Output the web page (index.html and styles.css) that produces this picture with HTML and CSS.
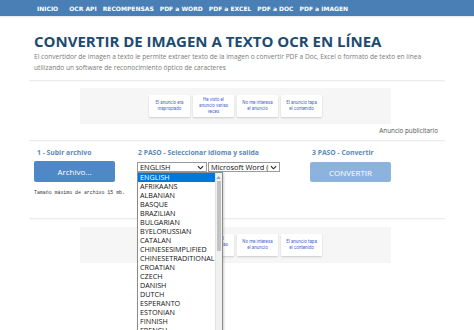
FILE: index.html
```html
<!DOCTYPE html>
<html lang="es">
<head>
    <meta charset="UTF-8">
    <meta name="viewport" content="width=device-width, initial-scale=1.0">
    <title>Convertir de imagen a texto OCR en línea</title>
    <link rel="stylesheet" href="styles.css">
</head>
<body>
    <!-- barra de navegación -->
    <nav class="topbar">
        <ul class="menu">
            <li class="menu-home">INICIO</li>
            <li>OCR API</li>
            <li>RECOMPENSAS</li>
            <li>PDF a WORD</li>
            <li>PDF a EXCEL</li>
            <li>PDF a DOC</li>
            <li>PDF a IMAGEN</li>
        </ul>
    </nav>

    <main class="page">
        <header class="intro">
            <h1>CONVERTIR DE IMAGEN A TEXTO OCR EN LÍNEA</h1>
            <p>El convertidor de imagen a texto le permite extraer texto de la imagen o convertir PDF a Doc, Excel o formato de texto en línea utilizando un software de reconocimiento óptico de caracteres</p>
        </header>

        <hr class="sep">

        <div class="ad-box">
            <div class="ad-btn">El anuncio era<br>inapropiado</div>
            <div class="ad-btn">He visto el<br>anuncio varias<br>veces</div>
            <div class="ad-btn">No me interesa<br>el anuncio</div>
            <div class="ad-btn">El anuncio tapa<br>el contenido</div>
        </div>
        <div class="ad-label">Anuncio publicitario</div>

        <hr class="sep sep-steps">

        <!-- pasos -->
        <section class="steps">
            <div class="step step-upload">
                <div class="step-title">1 - Subir archivo</div>
                <div class="btn btn-file">Archivo...</div>
                <div class="file-note">Tamaño máximo de archivo 15 mb.</div>
            </div>
            <div class="step step-options">
                <div class="step-title">2 PASO - Seleccionar idioma y salida</div>
                <div class="selects">
                    <div class="fake-select select-lang">
                        <span>ENGLISH</span>
                        <svg class="caret" viewBox="0 0 8 5" width="7" height="5"><path d="M1 1 L4 4 L7 1" fill="none" stroke="#222" stroke-width="1.3"/></svg>
                    </div>
                    <div class="fake-select select-out">
                        <span>Microsoft Word (docx)</span>
                        <svg class="caret" viewBox="0 0 8 5" width="7" height="5"><path d="M1 1 L4 4 L7 1" fill="none" stroke="#222" stroke-width="1.3"/></svg>
                    </div>

                    <!-- lista abierta del idioma -->
                    <div class="dropdown">
                        <ul class="options">
                            <li class="selected">ENGLISH</li>
                            <li>AFRIKAANS</li>
                            <li>ALBANIAN</li>
                            <li>BASQUE</li>
                            <li>BRAZILIAN</li>
                            <li>BULGARIAN</li>
                            <li>BYELORUSSIAN</li>
                            <li>CATALAN</li>
                            <li>CHINESESIMPLIFIED</li>
                            <li>CHINESETRADITIONAL</li>
                            <li>CROATIAN</li>
                            <li>CZECH</li>
                            <li>DANISH</li>
                            <li>DUTCH</li>
                            <li>ESPERANTO</li>
                            <li>ESTONIAN</li>
                            <li>FINNISH</li>
                            <li>FRENCH</li>
                        </ul>
                        <div class="scrollbar">
                            <div class="scroll-arrow">
                                <svg viewBox="0 0 6 4" width="5" height="3"><path d="M0 4 L3 0 L6 4 Z" fill="#a0a0a0"/></svg>
                            </div>
                            <div class="scroll-thumb"></div>
                        </div>
                    </div>
                </div>
            </div>
            <div class="step step-convert">
                <div class="step-title">3 PASO - Convertir</div>
                <div class="btn btn-convert">CONVERTIR</div>
            </div>
        </section>

        <hr class="sep sep-bottom">

        <div class="ad-box">
            <div class="ad-btn">El anuncio era<br>inapropiado</div>
            <div class="ad-btn">He visto el<br>anuncio varias<br>veces</div>
            <div class="ad-btn">No me interesa<br>el anuncio</div>
            <div class="ad-btn">El anuncio tapa<br>el contenido</div>
        </div>
    </main>
</body>
</html>
```

FILE: styles.css
```css
html,
body {
    margin: 0;
    height: 330px;
    overflow: hidden;
    background: #fff;
    font-family: "Open Sans", "Noto Sans", sans-serif;
}

/* barra superior */
.topbar {
    height: 16px;
    background-color: #4a7fb6;
    box-shadow: 0 1px 1px rgba(0, 0, 0, .08);
}
.menu {
    list-style: none;
    margin: 0;
    padding: 0 0 0 37px;
    display: flex;
    gap: 6px;
    height: 16px;
    align-items: center;
}
.menu li {
    color: #fff;
    font-family: "DejaVu Sans", sans-serif;
    font-weight: bold;
    font-size: 6px;
    white-space: nowrap;
}
.menu .menu-home {
    margin-right: 5px;
}

.page {
    width: 416px;
    margin: 0 auto;
}

.intro {
    padding-left: 5px;
}
.intro h1 {
    margin: 15px 0 0;
    font-size: 15px;
    line-height: 20px;
    font-weight: 700;
    color: #1d4b70;
    white-space: nowrap;
}
.intro p {
    margin: 0;
    padding-right: 20px;
    font-size: 6.6px;
    line-height: 11px;
    color: #7a7a7a;
}

.sep {
    margin: 7px 0 0;
    border: 0;
    height: 1px;
    background: #ececec;
    box-shadow: 0 1px 1px rgba(0, 0, 0, .03);
}
.sep-steps {
    margin-top: 4px;
}
.sep-bottom {
    margin-top: 22px;
}

/* anuncios */
.ad-box {
    margin: 7px 0 0 51px;
    width: 311px;
    height: 36px;
    background: #f6f6f6;
    display: flex;
    justify-content: center;
    align-items: center;
    gap: 3px;
}
.sep-bottom + .ad-box {
    margin-top: 8px;
}
.ad-btn {
    width: 41px;
    height: 22px;
    background: #fff;
    box-shadow: 0 1px 2px rgba(0, 0, 0, .18);
    border-radius: 1px;
    display: flex;
    align-items: center;
    justify-content: center;
    text-align: center;
    font-family: Roboto, sans-serif;
    font-size: 4.5px;
    line-height: 6px;
    color: #4a68cf;
}
.ad-label {
    margin-top: 2px;
    padding-right: 7px;
    text-align: right;
    font-size: 6.3px;
    line-height: 10px;
    color: #555;
}

/* pasos */
.steps {
    margin-top: 7px;
    display: grid;
    grid-template-columns: 108px 173px 81px;
}
.step-title {
    font-size: 6.8px;
    line-height: 9px;
    font-weight: 700;
    color: #5a88be;
    white-space: nowrap;
}
.step-upload {
    padding-left: 5px;
}
.step-upload .step-title {
    padding-left: 3px;
}
.step-options .step-title {
    padding-left: 1px;
}
.step-convert .step-title {
    padding-left: 2px;
}

.btn {
    width: 81px;
    height: 21px;
    margin-top: 4px;
    border-radius: 2px;
    color: #fff;
    font-size: 8px;
    display: flex;
    align-items: center;
    justify-content: center;
}
.btn-file {
    background: #4f88c7;
}
.btn-convert {
    background: #8cb3dd;
    height: 20px;
    margin-top: 5px;
}
.file-note {
    margin-top: 8px;
    font-family: "Liberation Mono", monospace;
    font-size: 4.9px;
    line-height: 6px;
    color: #333;
    white-space: nowrap;
}

.selects {
    position: relative;
    margin-top: 5px;
    display: flex;
    gap: 1px;
}
.fake-select {
    box-sizing: border-box;
    height: 10px;
    border: 1px solid #9a9a9a;
    background: #fff;
    display: flex;
    align-items: center;
    padding: 0 2px;
    font-size: 7.4px;
    color: #111;
    overflow: hidden;
    white-space: nowrap;
}
.fake-select span {
    flex: 1;
    overflow: hidden;
}
.select-lang {
    width: 70px;
}
.select-out {
    width: 72px;
}
.caret {
    flex: none;
    margin-left: 1px;
}

/* lista desplegada */
.dropdown {
    position: absolute;
    top: 10px;
    left: 0;
    width: 86px;
    height: 162px;
    box-sizing: border-box;
    border: 1px solid #8c8c8c;
    background: #fff;
    display: flex;
    box-shadow: 1px 1px 2px rgba(0, 0, 0, .2);
}
.options {
    list-style: none;
    margin: 0;
    padding: 0;
    flex: 1;
}
.options li {
    height: 9px;
    line-height: 9px;
    font-size: 7.2px;
    padding-left: 2px;
    color: #111;
    white-space: nowrap;
}
.options .selected {
    background: #0078d7;
    color: #fff;
}
.scrollbar {
    width: 7px;
    background: #f0f0f0;
    border-left: 1px solid #e2e2e2;
}
.scroll-arrow {
    height: 8px;
    display: flex;
    align-items: center;
    justify-content: center;
}
.scroll-thumb {
    margin: 0 1px;
    height: 70px;
    background: #c2c2c2;
}
```
